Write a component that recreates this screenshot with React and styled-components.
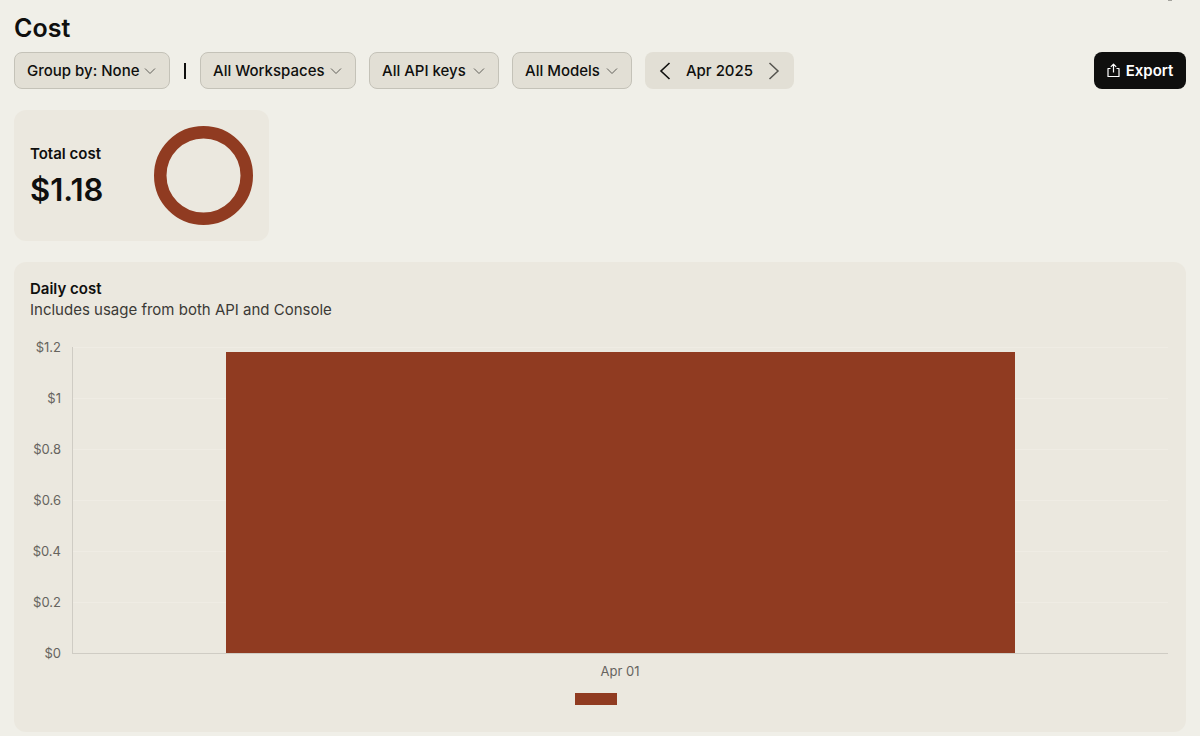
import React from "react";
import styled, { createGlobalStyle } from "styled-components";

const ink = "#0f0f0e";
const rust = "#903b21";
const sand = "#e2dfd5";

const GlobalStyle = createGlobalStyle`
  *, *::before, *::after { box-sizing: border-box; }
  body {
    margin: 0;
    background: #f0efe8;
    color: ${ink};
    font-family: Inter, "Liberation Sans", sans-serif;
    font-size: 15px;
    line-height: 21px;
  }
  button, select { font: inherit; color: inherit; }
`;

const Page = styled.main`
  padding: 12px 14px 4px;
`;

const TopMark = styled.span`
  position: absolute;
  top: 0;
  right: 28px;
  width: 4px;
  height: 1px;
  background: #a5a49e;
`;

const Title = styled.h1`
  margin: 0 0 8px;
  font-size: 25px;
  line-height: 32px;
  font-weight: 600;
`;

const Toolbar = styled.div`
  display: flex;
  align-items: center;
  gap: 13px;
  margin-bottom: 21px;
`;

const Separator = styled.span`
  width: 4px;
  height: 16px;
  border: solid transparent;
  border-width: 0 1px;
  background: ${ink};
  background-clip: padding-box;
`;

const Picker = styled.label`
  position: relative;
  display: flex;
  width: ${(p) => p.$width}px;
`;

const Select = styled.select`
  appearance: none;
  width: 100%;
  height: 37px;
  padding: 0 24px 0 12px;
  border: 1px solid #c4c2b8;
  border-radius: 8px;
  background: ${sand};
  font-weight: 500;
  cursor: pointer;
`;

const Chevron = styled.svg`
  position: absolute;
  right: 14px;
  top: 15px;
  width: 12px;
  height: 8px;
  pointer-events: none;
`;

const MonthStepper = styled.div`
  display: flex;
  align-items: center;
  justify-content: space-between;
  width: 149px;
  height: 37px;
  padding: 0 8px;
  border-radius: 8px;
  background: ${sand};
  font-weight: 500;
`;

const StepButton = styled.button`
  display: flex;
  justify-content: center;
  width: 24px;
  padding: 0;
  border: 0;
  background: none;
  color: ${(p) => (p.$muted ? "#55544f" : ink)};
  cursor: pointer;
`;

const ExportButton = styled.button`
  display: flex;
  align-items: center;
  justify-content: center;
  gap: 6px;
  width: 92px;
  height: 37px;
  margin-left: auto;
  padding: 0;
  border: 0;
  border-radius: 8px;
  background: ${ink};
  color: #fff;
  font-weight: 600;
  cursor: pointer;
`;

const Card = styled.section`
  border-radius: 12px;
  background: #ebe8df;
  padding: 16px;
`;

const TotalCard = styled(Card)`
  display: flex;
  align-items: center;
  justify-content: space-between;
  width: 255px;
  margin-bottom: 21px;
`;

const CardTitle = styled.h2`
  margin: 0;
  font-size: 15px;
  line-height: 21px;
  font-weight: 600;
`;

const Amount = styled.p`
  margin: 8px 0 0;
  font-size: 31px;
  line-height: 36px;
  font-weight: 600;
`;

const DailyCard = styled(Card)`
  padding-bottom: 27px;
`;

const Subtitle = styled.p`
  margin: 0 0 18px;
  color: #3b3a36;
`;

const Chart = styled.div`
  display: grid;
  grid-template-columns: 31px 1fr;
  column-gap: 11px;
  padding-right: 2px;
  color: #66645e;
  font-size: 13px;
  line-height: 18px;
`;

const YAxis = styled.div`
  display: flex;
  flex-direction: column;
  justify-content: space-between;
  height: 324px;
  text-align: right;
`;

const Plot = styled.div`
  display: flex;
  align-items: flex-end;
  justify-content: center;
  margin: 9px 0 8px;
  border-left: 1px solid #cfccc4;
  border-bottom: 1px solid #cfccc4;
  background: repeating-linear-gradient(to bottom, #efece4 0 1px, transparent 1px 51px);
`;

const Bar = styled.div`
  width: 72%;
  background: ${rust};
`;

const XLabel = styled.div`
  grid-column: 2;
  text-align: center;
`;

const Legend = styled.div`
  display: flex;
  justify-content: center;
  margin-top: 13px;
`;

const Swatch = styled.span`
  width: 42px;
  height: 12px;
  margin-right: 8px;
  background: ${rust};
`;

const filters = [
  { name: "Workspace", width: 156, options: ["All Workspaces"] },
  { name: "API key", width: 130, options: ["All API keys"] },
  { name: "Model", width: 120, options: ["All Models"] },
];

const ticks = ["$1.2", "$1", "$0.8", "$0.6", "$0.4", "$0.2", "$0"];
const days = [{ label: "Apr 01", cost: 1.18 }];
const maxCost = 1.2;

function Dropdown({ name, width, options }) {
  return (
    <Picker $width={width}>
      <Select aria-label={name}>
        {options.map((o) => (
          <option key={o}>{o}</option>
        ))}
      </Select>
      <Chevron viewBox="0 0 12 8" fill="none" stroke="#605f59" aria-hidden="true">
        <path d="M1 1.500 6 6.500 11 1.500" />
      </Chevron>
    </Picker>
  );
}

export default function App() {
  return (
    <>
      <GlobalStyle />
      <Page>
        <TopMark aria-hidden="true" />
        <Title>Cost</Title>
        <Toolbar>
          <Dropdown name="Group by" width={156} options={["Group by: None"]} />
          <Separator />
          {filters.map((f) => (
            <Dropdown key={f.name} {...f} />
          ))}
          <MonthStepper>
            <StepButton aria-label="Previous month">
              <svg width="12" height="18" viewBox="0 0 12 18" fill="none" stroke="currentColor" strokeWidth="1.6">
                <path d="M10.500 1 2 9l8.500 8" />
              </svg>
            </StepButton>
            Apr 2025
            <StepButton $muted aria-label="Next month">
              <svg width="12" height="18" viewBox="0 0 12 18" fill="none" stroke="currentColor" strokeWidth="1.5">
                <path d="M1.500 1 10 9l-8.500 8" />
              </svg>
            </StepButton>
          </MonthStepper>
          <ExportButton>
            <svg width="13" height="15" viewBox="0 0 13 15" fill="none" stroke="currentColor" strokeWidth="1.2" strokeLinejoin="round" aria-hidden="true">
              <path d="M3.500 5.500H1v8h11v-8H9.500M6.500 9.500V1.500M3.800 3.800l2.700-2.700 2.700 2.700" />
            </svg>
            Export
          </ExportButton>
        </Toolbar>

        <TotalCard>
          <div>
            <CardTitle>Total cost</CardTitle>
            <Amount>$1.18</Amount>
          </div>
          <svg width="99" height="99" viewBox="0 0 99 99" fill="none" aria-hidden="true">
            <circle cx="49.5" cy="49.5" r="43.25" stroke={rust} strokeWidth="12.5" />
          </svg>
        </TotalCard>

        <DailyCard>
          <CardTitle>Daily cost</CardTitle>
          <Subtitle>Includes usage from both API and Console</Subtitle>
          <Chart>
            <YAxis>
              {ticks.map((t) => (
                <span key={t}>{t}</span>
              ))}
            </YAxis>
            <Plot>
              {days.map((d) => (
                <Bar key={d.label} style={{ height: `${(d.cost / maxCost) * 100}%` }} />
              ))}
            </Plot>
            {days.map((d) => (
              <XLabel key={d.label}>{d.label}</XLabel>
            ))}
          </Chart>
          <Legend>
            <Swatch />
          </Legend>
        </DailyCard>
      </Page>
    </>
  );
}
